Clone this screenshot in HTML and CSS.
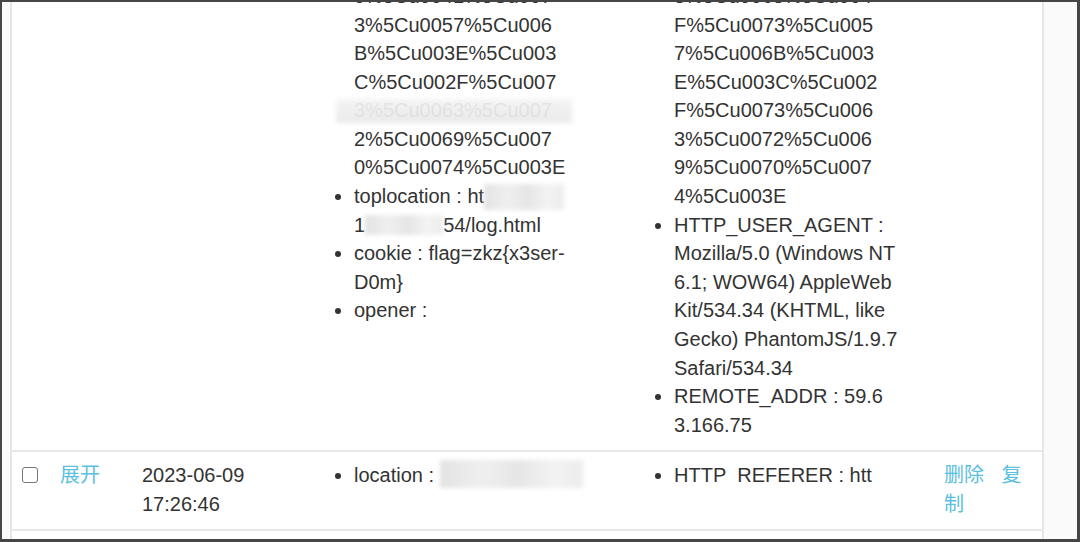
FILE: index.html
```html
<!DOCTYPE html>
<html lang="zh-CN">
<head>
<meta charset="utf-8">
<title>log</title>
<link rel="stylesheet" href="styles.css">
</head>
<body>
<div class="frame">
  <div class="viewport">
    <table class="log">
      <colgroup>
        <col class="c-chk"><col class="c-tog"><col class="c-time"><col class="c-url"><col class="c-hdr"><col class="c-act">
      </colgroup>
      <tbody>
        <tr>
          <td><input type="checkbox" class="chk"></td>
          <td><a class="link">收起</a></td>
          <td>2023-06-09<br>17:31:05</td>
          <td>
            <ul class="kv">
              <li>
                <span class="ln">location : http://1</span>
                <span class="ln">/xss.php?id=%5Cu003C</span>
                <span class="ln">%5Cu0073%5Cu0063%5Cu007</span>
                <span class="ln">2%5Cu0069%5Cu0070%5Cu007</span>
                <span class="ln">%5Cu0063%5Cu0072%5Cu004</span>
                <span class="ln">9%5Cu0041%5Cu007</span>
                <span class="ln">3%5Cu0057%5Cu006</span>
                <span class="ln">B%5Cu003E%5Cu003</span>
                <span class="ln">C%5Cu002F%5Cu007</span>
                <span class="ln smudge">3%5Cu0063%5Cu007</span>
                <span class="ln">2%5Cu0069%5Cu007</span>
                <span class="ln">0%5Cu0074%5Cu003E</span>
              </li>
              <li>
                <span class="ln">toplocation : ht<span class="blot blot-a"></span></span>
                <span class="ln">1<span class="blot blot-b"></span>54/log.html</span>
              </li>
              <li>
                <span class="ln">cookie : flag=zkz{x3ser-</span>
                <span class="ln">D0m}</span>
              </li>
              <li>
                <span class="ln">opener :</span>
              </li>
            </ul>
          </td>
          <td>
            <ul class="kv">
              <li>
                <span class="ln">HTTP_REFERER : http://</span>
                <span class="ln">1/xss.php?id=%5Cu003C</span>
                <span class="ln">%5Cu0073%5Cu0063%5Cu007</span>
                <span class="ln">2%5Cu0069%5Cu0070%5Cu007</span>
                <span class="ln">%5Cu0072%5Cu0069%5Cu0070</span>
                <span class="ln">3%5Cu0065%5Cu004</span>
                <span class="ln">F%5Cu0073%5Cu005</span>
                <span class="ln">7%5Cu006B%5Cu003</span>
                <span class="ln">E%5Cu003C%5Cu002</span>
                <span class="ln">F%5Cu0073%5Cu006</span>
                <span class="ln">3%5Cu0072%5Cu006</span>
                <span class="ln">9%5Cu0070%5Cu007</span>
                <span class="ln">4%5Cu003E</span>
              </li>
              <li>
                <span class="ln">HTTP_USER_AGENT :</span>
                <span class="ln">Mozilla/5.0 (Windows NT</span>
                <span class="ln">6.1; WOW64) AppleWeb</span>
                <span class="ln">Kit/534.34 (KHTML, like</span>
                <span class="ln">Gecko) PhantomJS/1.9.7</span>
                <span class="ln">Safari/534.34</span>
              </li>
              <li>
                <span class="ln">REMOTE_ADDR : 59.6</span>
                <span class="ln">3.166.75</span>
              </li>
            </ul>
          </td>
          <td class="act"><a class="link">删除</a> <a class="link">复制</a></td>
        </tr>
        <tr>
          <td><input type="checkbox" class="chk"></td>
          <td><a class="link">展开</a></td>
          <td>2023-06-09<br>17:26:46</td>
          <td class="redacted-cell">
            <ul class="kv">
              <li><span class="clip">location : </span></li>
            </ul>
            <span class="blot blot-loc"></span>
          </td>
          <td>
            <ul class="kv">
              <li><span class="clip">HTTP_REFERER : htt<br>p://</span></li>
            </ul>
          </td>
          <td class="act"><a class="link">删除</a> <a class="link">复制</a></td>
        </tr>
        <tr class="filler">
          <td></td><td></td><td></td><td></td><td></td><td></td>
        </tr>
      </tbody>
    </table>
  </div>
</div>
</body>
</html>
```

FILE: styles.css
```css
html, body {
  margin: 0;
  padding: 0;
  background: #ffffff;
}

body {
  font-family: "Liberation Sans", Arial, "Noto Sans CJK SC", sans-serif;
  font-size: 20px;
  line-height: 28.571px;
  color: #333333;
}

.frame {
  width: 1080px;
  height: 542px;
  box-sizing: border-box;
  border-style: solid;
  border-color: #454545;
  border-width: 2px 3px 3px 2px;
  background: #fafafa;
  overflow: hidden;
}

.viewport {
  padding: 0 33px 0 8px;
}

.log {
  box-sizing: border-box;
  width: 1034px;
  margin-top: -171.9px;
  border-collapse: separate;
  border-spacing: 0;
  table-layout: fixed;
  background: #ffffff;
  border-left: 2px solid #e6e6e6;
  border-right: 2px solid #e6e6e6;
}

.c-chk { width: 38px; }
.c-tog { width: 82px; }
.c-time { width: 188px; }
.c-url { width: 320px; }
.c-hdr { width: 294px; }
.c-act { width: 108px; }

.log td {
  padding: 9px 10px 11px;
  vertical-align: top;
  border-bottom: 2px solid #e8e8e8;
}

.filler td {
  height: 40px;
}

.chk {
  appearance: none;
  -webkit-appearance: none;
  display: block;
  box-sizing: border-box;
  width: 16px;
  height: 16px;
  margin: 6px 0 0 0;
  border: 1.5px solid #777777;
  border-radius: 3px;
  background: #ffffff;
}

.link {
  color: #5bc0de;
  text-decoration: none;
  cursor: pointer;
}

.act .link + .link {
  margin-left: 12px;
}

.kv {
  margin: 0;
  padding: 0 0 0 24px;
  list-style: none;
}

.kv li {
  position: relative;
}

.kv li::before {
  content: "";
  position: absolute;
  left: -19px;
  top: 12px;
  width: 6px;
  height: 6px;
  border-radius: 50%;
  background: #333333;
}

.ln {
  display: block;
  white-space: nowrap;
}

.clip {
  display: block;
  height: 22px;
  overflow: hidden;
  white-space: nowrap;
}

.blot {
  display: inline-block;
  background: linear-gradient(90deg, #e3e3e3 0%, #efefef 30%, #e6e6e6 55%, #f3f3f3 80%, #ececec 100%);
  filter: blur(2px);
}

.blot-a {
  width: 80px;
  height: 26px;
  vertical-align: -7px;
}

.blot-b {
  width: 78px;
  height: 20px;
  vertical-align: -3px;
}

.smudge {
  position: relative;
  color: #c4c4c4;
}

.smudge::after {
  content: "";
  position: absolute;
  left: -18px;
  top: 3px;
  width: 236px;
  height: 24px;
  background: linear-gradient(180deg, rgba(240, 240, 240, 0.75), rgba(228, 228, 228, 0.8));
  filter: blur(2.5px);
}

.redacted-cell {
  position: relative;
}

.blot-loc {
  position: absolute;
  left: 120px;
  top: 8px;
  width: 143px;
  height: 28px;
}
```
